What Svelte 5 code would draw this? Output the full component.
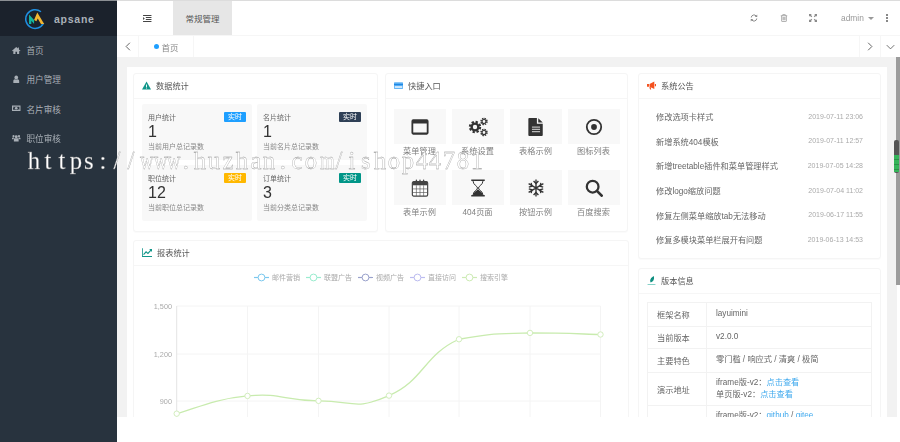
<script>
  const menu = [
    { label: '首页', icon: 'home' },
    { label: '用户管理', icon: 'user' },
    { label: '名片审核', icon: 'money' },
    { label: '职位审核', icon: 'users' }
  ];
  const stats = [
    { t: '用户统计', n: '1', s: '当前用户总记录数', c: 'blue' },
    { t: '名片统计', n: '1', s: '当前名片总记录数', c: 'navy' },
    { t: '职位统计', n: '12', s: '当前职位总记录数', c: 'amber' },
    { t: '订单统计', n: '3', s: '当前分类总记录数', c: 'teal' }
  ];
  const quick = [
    { l: '菜单管理', i: 'window' }, { l: '系统设置', i: 'gears' }, { l: '表格示例', i: 'file' }, { l: '图标列表', i: 'dot' },
    { l: '表单示例', i: 'calendar' }, { l: '404页面', i: 'hourglass' }, { l: '按钮示例', i: 'snow' }, { l: '百度搜索', i: 'search' }
  ];
  const notices = [
    ['修改选项卡样式', '2019-07-11 23:06'],
    ['新增系统404模板', '2019-07-11 12:57'],
    ['新增treetable插件和菜单管理样式', '2019-07-05 14:28'],
    ['修改logo缩放问题', '2019-07-04 11:02'],
    ['修复左侧菜单缩放tab无法移动', '2019-06-17 11:55'],
    ['修复多模块菜单栏展开有问题', '2019-06-13 14:53']
  ];
  const legend = [
    { l: '邮件营销', x: 254, c: '#7cc8ee' },
    { l: '联盟广告', x: 306, c: '#9aeccf' },
    { l: '视频广告', x: 358, c: '#9aa2cc' },
    { l: '直接访问', x: 410, c: '#bcbcf0' },
    { l: '搜索引擎', x: 462, c: '#cdebb4' }
  ];
  const xs = [176.7, 247.5, 318.5, 389, 459, 530, 600.5];
  const vals = [820, 932, 901, 934, 1290, 1330, 1320];
  const pts = vals.map((v, i) => [xs[i], 401 - ((v - 900) * 47.5) / 300]);
  const top = Math.min(...pts.map((p) => p[1]));
  function smooth(p) {
    let d = `M${p[0][0]} ${p[0][1]}`;
    for (let i = 0; i < p.length - 1; i++) {
      const a = p[i], b = p[i + 1], pa = p[i - 1] || a, nb = p[i + 2] || b;
      const c1 = [a[0] + (b[0] - pa[0]) * 0.25, Math.max(top, a[1] + (b[1] - pa[1]) * 0.25)];
      const c2 = [b[0] - (nb[0] - a[0]) * 0.25, Math.max(top, b[1] - (nb[1] - a[1]) * 0.25)];
      d += `C${c1[0]} ${c1[1]} ${c2[0]} ${c2[1]} ${b[0]} ${b[1]}`;
    }
    return d;
  }
  const line = smooth(pts);
  const markChars = [...'https://www.huzhan.com/ishop44781'];
</script>

{#snippet quickIcon(name)}
  <svg class="qicon" class:big={name === 'gears'} viewBox="0 0 20 20">
    {#if name === 'window'}
      <path fill="#333" fill-rule="evenodd" d="M2.500 1.500h15a2 2 0 0 1 2 2v13a2 2 0 0 1-2 2h-15a2 2 0 0 1-2-2v-13a2 2 0 0 1 2-2zM2.500 6v10.200h15V6z" />
    {:else if name === 'gears'}
      <g fill="none" stroke="#333">
        <circle cx="7" cy="10" r="5.200" stroke-width="2" stroke-dasharray="2.300 1.780" />
        <circle cx="7" cy="10" r="3.400" stroke-width="2.400" />
        <circle cx="16" cy="4.500" r="3" stroke-width="1.400" stroke-dasharray="1.500 .86" />
        <circle cx="16" cy="4.500" r="2" stroke-width="1.200" />
        <circle cx="16" cy="15.500" r="3" stroke-width="1.400" stroke-dasharray="1.500 .86" />
        <circle cx="16" cy="15.500" r="2" stroke-width="1.200" />
      </g>
    {:else if name === 'file'}
      <path fill="#333" d="M2.500 0h8.500v6.500h6.500v12.500a1 1 0 0 1-1 1h-14a1 1 0 0 1-1-1v-18a1 1 0 0 1 1-1zM12.500 .3l5 4.800h-5z" />
      <path fill="#bbb" d="M5.500 9.500h9v1.200h-9zM5.500 12h9v1.200h-9zM5.500 14.500h9v1.200h-9z" />
    {:else if name === 'dot'}
      <circle cx="10" cy="10" r="8" fill="none" stroke="#333" stroke-width="2" />
      <circle cx="10" cy="10" r="3.200" fill="#333" />
    {:else if name === 'calendar'}
      <rect x="1.500" y="3" width="17" height="16" rx="1.500" fill="#fff" stroke="#444" stroke-width="1.300" />
      <path fill="#444" d="M2 3h16v4H2z" />
      <path stroke="#555" stroke-width=".7" d="M2 11h16M2 15h16M6 7v12M10 7v12M14 7v12" />
      <path stroke="#444" stroke-width="1.500" stroke-linecap="round" d="M6 1.200v3M10 1.200v3M14 1.200v3" />
    {:else if name === 'hourglass'}
      <path fill="#333" d="M2.500 .5h15v1.800h-15zM2.500 17.700h15v1.800h-15z" />
      <path fill="none" stroke="#333" stroke-width="1.100" d="M4.500 2.300c0 4 5 5.700 5 7.700s-5 3.700-5 7.700M15.500 2.300c0 4-5 5.700-5 7.700s5 3.700 5 7.700" />
      <path fill="#333" d="M10 11c1 2 5.200 3.300 5.400 6.800H4.600C4.800 14.300 9 13 10 11z" />
    {:else if name === 'snow'}
      <g fill="none" stroke="#333" stroke-width="1.500">
        <path d="M10 .5v19M1.800 5.200l16.400 9.600M18.200 5.200L1.800 14.800" />
        <path d="M7.300 2.300L10 5l2.700-2.700M7.300 17.700L10 15l2.700 2.700M2 9l3.500-1L4.600 4.300M18 11l-3.500 1 .9 3.700M18 9l-3.500-1 .9-3.700M2 11l3.500 1-.9 3.700" />
      </g>
    {:else if name === 'search'}
      <circle cx="8.500" cy="8.500" r="6.500" fill="none" stroke="#333" stroke-width="2.500" />
      <path d="M13.500 13.500l5 5" stroke="#333" stroke-width="3" stroke-linecap="round" />
    {/if}
  </svg>
{/snippet}

<div class="app">
  <aside class="side">
    <div class="brand">
      <svg class="logo" viewBox="0 0 24 24">
        <path d="M18.500 4.100A10.200 10.200 0 1 0 21.300 16.500" fill="none" stroke="#1f8fe0" stroke-width="1.700" />
        <path d="M5.500 17.500V7l5.500 6v4.500L8 14v3.500z" fill="#12b5a0" />
        <path d="M11 13l3.500-8L22 17.500h-3.500l-3.500-6-1.500 3z" fill="#f2b632" />
      </svg>
      <span class="brandname">apsane</span>
    </div>
    <nav class="menu">
      {#each menu as m}
        <div class="mitem">
          <svg class="micon" viewBox="0 0 16 16">
            {#if m.icon === 'home'}
              <path d="M8 2L0 9l1 1 1.500-1.200V15h4v-4h3v4h4V8.800L15 10l1-1-3-2.600V3h-2v1.700z" />
            {:else if m.icon === 'user'}
              <circle cx="8" cy="4.500" r="3.500" /><path d="M2.500 15v-3.500C2.500 9 4 8 5.500 7.800c1.500 1 3.500 1 5 0 1.500.2 3 1.200 3 3.700V15z" />
            {:else if m.icon === 'money'}
              <path fill-rule="evenodd" d="M0 3h16v10H0zM2 5v6h12V5z" /><circle cx="8" cy="8" r="2.500" /><path d="M2.500 5.500h1.500v1h-1.500zM12 9.500h1.500v1H12z" />
            {:else}
              <circle cx="8" cy="5" r="2.800" /><circle cx="2.800" cy="4" r="2" /><circle cx="13.200" cy="4" r="2" />
              <path d="M3.500 14v-3.500c0-1.800 1.200-2.500 2.500-2.500h4c1.300 0 2.500.7 2.500 2.500V14zM0 10V8c0-1 .8-1.500 1.500-1.500h2c.2.7.5 1 1 1.300-1.500.4-2 1.200-2 2.200zM16 10V8c0-1-.8-1.500-1.500-1.500h-2c-.2.700-.5 1-1 1.300 1.500.4 2 1.200 2 2.200z" />
            {/if}
          </svg>
          <span>{m.label}</span>
        </div>
      {/each}
    </nav>
  </aside>

  <main class="main">
    <header class="top">
      <div class="burger">
        <svg viewBox="0 0 12 10" class="ticon dark">
          <path d="M0 0h12v1.400H0zM4 2.900h8v1.400H4zM4 5.700h8v1.400H4zM0 8.600h12V10H0z" /><path d="M0 3l2.500 2L0 7z" />
        </svg>
      </div>
      <div class="toptab">常规管理</div>
      <div class="topright">
        <svg viewBox="0 0 16 16" class="ticon">
          <path fill="none" stroke="currentColor" stroke-width="2" d="M2.500 7A5.500 5.500 0 0 1 12.500 4.200M13.500 9A5.500 5.500 0 0 1 3.500 11.800" />
          <path d="M14.500 1v5h-5zM1.500 15v-5h5z" />
        </svg>
        <svg viewBox="0 0 16 16" class="ticon">
          <path fill="none" stroke="currentColor" stroke-width="1.300" d="M1.500 3.500h13M3.200 3.500v10.500a1 1 0 0 0 1 1h7.600a1 1 0 0 0 1-1V3.500M5.500 3.500V1.200h5v2.300M6 6v6.500M8 6v6.500M10 6v6.500" />
        </svg>
        <svg viewBox="0 0 16 16" class="ticon">
          <path d="M0 0h5.500L3.700 1.800 6.500 4.600 4.600 6.500 1.800 3.700 0 5.500zM16 0v5.500l-1.800-1.800-2.800 2.800-1.900-1.900 2.800-2.800L10.500 0zM0 16v-5.500l1.800 1.800 2.800-2.800 1.900 1.900-2.800 2.800 1.800 1.800zM16 16h-5.500l1.800-1.800-2.800-2.800 1.900-1.900 2.800 2.800 1.800-1.800z" />
        </svg>
        <div class="admin">admin<i class="caret"></i></div>
        <div class="dots"><i></i><i></i><i></i></div>
      </div>
    </header>

    <div class="tabs">
      <div class="tnav left">
        <svg viewBox="0 0 8 12" class="chev"><path d="M6.500 1L1.500 6l5 5" /></svg>
      </div>
      <div class="tab"><i class="dot"></i>首页</div>
      <div class="tspace"></div>
      <div class="tnav wide">
        <svg viewBox="0 0 8 12" class="chev"><path d="M1.500 1l5 5-5 5" /></svg>
      </div>
      <div class="tnav wide last">
        <svg viewBox="0 0 12 8" class="chevd"><path d="M1 1.500l5 5 5-5" /></svg>
      </div>
    </div>

    <div class="content">
      <div class="panel">
        <div class="leftcol">
          <div class="toprow">
            <section class="card">
              <h3 class="chead">
                <svg viewBox="0 0 16 16" class="hicon"><path d="M8 1l8 14H0z" fill="#11968a" /><path d="M7.200 6h1.600v5H7.200zM7.200 12h1.600v1.500H7.200z" fill="#fff" /></svg>
                数据统计
              </h3>
              <div class="statgrid">
                {#each stats as s}
                  <div class="stat">
                    <div class="stathead"><span>{s.t}</span><em class={s.c}>实时</em></div>
                    <div class="num">{s.n}</div>
                    <div class="sub">{s.s}</div>
                  </div>
                {/each}
              </div>
            </section>
            <section class="card">
              <h3 class="chead">
                <svg viewBox="0 0 16 16" class="hicon"><path d="M1 2h14a1 1 0 0 1 1 1v10a1 1 0 0 1-1 1H1a1 1 0 0 1-1-1V3a1 1 0 0 1 1-1z" fill="#64b5f6" /><path d="M0 5h16v2.500H0z" fill="#1e88e5" /><path d="M1.500 9h13v3.500h-13z" fill="#cfe8fc" /></svg>
                快捷入口
              </h3>
              <div class="quickgrid">
                {#each quick as q}
                  <div class="quick">
                    <div class="qbox">{@render quickIcon(q.i)}</div>
                    <div class="qlabel">{q.l}</div>
                  </div>
                {/each}
              </div>
            </section>
          </div>
          <section class="card chart">
            <h3 class="chead">
              <svg viewBox="0 0 16 14" class="hicon wide"><path d="M0 0h1.300v12.700H16V14H0z" fill="#11968a" /><path d="M2.500 10.500l4-4.500 3 2.500L15 2.500" fill="none" stroke="#11968a" stroke-width="1.800" /><path d="M11.500 1.500H16V6z" fill="#11968a" /></svg>
              报表统计
            </h3>
            <svg class="plot" viewBox="134 266 494 190" width="494" height="190">
              {#each legend as l}
                <path d="M{l.x} 277.500h15" stroke={l.c} stroke-width="1.200" />
                <circle cx={l.x + 7.500} cy="277.500" r="3.400" fill="#fff" stroke={l.c} stroke-width="1" />
                <text x={l.x + 18} y="280" class="legend">{l.l}</text>
              {/each}
              {#each [306, 354, 401] as y}
                <path d="M176.700 {y}H600.500" stroke="#f4f4f4" stroke-width="1" />
              {/each}
              {#each xs as x, i}
                <path d="M{x} 306V456" stroke={i === 0 ? '#e4e4e4' : '#f4f4f4'} stroke-width="1" />
              {/each}
              <text x="172" y="308.500" class="axis">1,500</text>
              <text x="172" y="356.500" class="axis">1,200</text>
              <text x="172" y="403.500" class="axis">900</text>
              <path d={line} fill="none" stroke="#c8ebae" stroke-width="1.300" />
              {#each pts as p}
                <circle cx={p[0]} cy={p[1]} r="2.700" fill="#fff" stroke="#d2eebd" stroke-width="1" />
              {/each}
            </svg>
          </section>
        </div>

        <div class="rightcol">
          <section class="card notice">
            <h3 class="chead">
              <svg viewBox="0 0 16 14" class="hicon"><path d="M0 4.500h3.500v4.500H0zM4.500 4.500L13 0v13L4.500 9zM14 4.500h2v4h-2zM4 10h2.500l1 4h-2z" fill="#f4511e" /></svg>
              系统公告
            </h3>
            <ul class="nlist">
              {#each notices as n}
                <li><span>{n[0]}</span><time>{n[1]}</time></li>
              {/each}
            </ul>
          </section>
          <section class="card version">
            <h3 class="chead">
              <svg viewBox="0 0 16 16" class="hicon"><path d="M12 0c1 3 .5 6-1 8.500-1 1.500-2.500 2.500-4.500 3L5.500 9C5.500 5 8.500 2 12 0z" fill="#0f8f80" /><path d="M1 14h14v1.500H1z" fill="#5fc2b6" /></svg>
              版本信息
            </h3>
            <div class="tablewrap">
              <table>
                <tbody>
                  <tr class="r1"><th>框架名称</th><td>layuimini</td></tr>
                  <tr class="r2"><th>当前版本</th><td>v2.0.0</td></tr>
                  <tr class="r1"><th>主要特色</th><td>零门槛 / 响应式 / 清爽 / 极简</td></tr>
                  <tr class="r3"><th>演示地址</th><td>iframe版-v2：<a href="#a">点击查看</a><br />单页版-v2：<a href="#a">点击查看</a></td></tr>
                  <tr class="r3"><th>下载地址</th><td>iframe版-v2：<a href="#a">github</a> / <a href="#a">gitee</a><br />单页版-v2：<a href="#a">github</a> / <a href="#a">gitee</a></td></tr>
                </tbody>
              </table>
            </div>
          </section>
        </div>
      </div>
      <div class="track"><div class="bar"></div></div>
      <div class="thumb"><i></i></div>
    </div>
  </main>
  <div class="mark">{#each markChars as c}<span class:tight={c === 'w' || c === 'm'}>{c}</span>{/each}</div>
</div>

<style>
  :global(body) { margin: 0; background: #fff; }
  .app {
    position: relative;
    display: flex;
    width: 900px;
    height: 442px;
    overflow: hidden;
    font-family: "Liberation Sans", "Noto Sans CJK SC", sans-serif;
    filter: blur(0.4px);
  }
  .side { width: 117px; flex: none; background: #28333e; color: #a8afb6; }
  .brand {
    height: 36px;
    background: #1b222c;
    display: flex;
    align-items: center;
    gap: 8px;
    padding-left: 24px;
    box-sizing: border-box;
    border-top: 1px solid #8b8f93;
  }
  .logo { width: 22px; height: 22px; }
  .brandname { font-size: 10.500px; font-weight: 700; color: #a9b0b8; letter-spacing: .75px; }
  .mitem {
    height: 29.400px;
    box-sizing: border-box;
    padding: 0 0 1.500px 12px;
    display: flex;
    align-items: center;
    gap: 6px;
    font-size: 8.600px;
  }
  .micon { width: 8.500px; height: 8.500px; fill: #a8afb6; flex: none; }

  .main { flex: 1; min-width: 0; display: flex; flex-direction: column; height: 417px; }
  .top {
    height: 36px;
    box-sizing: border-box;
    display: flex;
    align-items: stretch;
    border-top: 1px solid #dcdcdc;
    border-bottom: 1px solid #f6f6f6;
  }
  .burger { width: 56px; box-sizing: border-box; padding-left: 5px; display: flex; align-items: center; justify-content: center; }
  .ticon { width: 8px; height: 8px; fill: #8a8a8a; color: #8a8a8a; flex: none; }
  .ticon.dark { width: 8.500px; height: 7px; fill: #444; }
  .toptab {
    width: 59px;
    background: #e6e6e6;
    display: flex;
    align-items: center;
    justify-content: center;
    font-size: 8.500px;
    color: #555;
  }
  .topright {
    margin-left: auto;
    display: flex;
    align-items: center;
    padding-right: 12px;
    gap: 21.500px;
  }
  .admin { display: flex; align-items: center; font-size: 8.400px; color: #999; margin-left: 2.500px; margin-right: -8.500px; width: 32px; flex: none; }
  .caret {
    margin-left: 4px;
    border: 3px solid transparent;
    border-top: 3.500px solid #999;
    border-bottom: 0;
  }
  .dots { display: flex; flex-direction: column; gap: 1px; }
  .dots i { width: 2px; height: 2px; background: #888; display: block; }

  .tabs { height: 21px; flex: none; display: flex; align-items: center; }
  .tnav { width: 22px; height: 100%; display: flex; align-items: center; justify-content: center; }
  .tnav.left { border-right: 1px solid #f6f6f6; box-sizing: border-box; padding-left: 1px; }
  .tnav.wide { width: 20.500px; border-left: 1px solid #f6f6f6; box-sizing: border-box; }
  .tab {
    width: 55px;
    height: 100%;
    box-sizing: border-box;
    padding-left: 14.500px;
    display: flex;
    align-items: center;
    gap: 3px;
    font-size: 8.500px;
    color: #888;
    border-right: 1px solid #f6f6f6;
  }
  .tab .dot { width: 5px; height: 5px; border-radius: 50%; background: #1e9fff; flex: none; }
  .tspace { flex: 1; }
  .chev { width: 6px; height: 9px; fill: none; stroke: #555; stroke-width: 1.200; }
  .chevd { width: 9px; height: 6px; fill: none; stroke: #555; stroke-width: 1.100; }

  .content {
    position: relative;
    flex: 1;
    min-height: 0;
    background: #f2f2f2;
    display: flex;
    padding: 10px 0 0 10px;
    overflow: hidden;
  }
  .panel {
    width: 760px;
    flex: none;
    box-sizing: border-box;
    background: #fff;
    padding: 6px 6px 0 6px;
    display: grid;
    grid-template-columns: 496px 243px;
    column-gap: 9px;
    align-items: start;
    overflow: hidden;
  }
  .track { margin-left: 10px; margin-top: -10px; width: 3px; background: #fff; flex: none; }
  .bar { height: 228px; background: #9c9c9c; margin-left: -1px; width: 4px; }
  .thumb {
    position: absolute;
    left: 777px;
    top: 83px;
    width: 4.500px;
    height: 33px;
    background: #555;
    border-radius: 2px;
    display: flex;
    flex-direction: column;
    justify-content: flex-end;
    padding-bottom: 1px;
    box-sizing: border-box;
  }
  .thumb i {
    display: block;
    height: 17px;
    background: repeating-linear-gradient(#35b55a 0 4px, #2c8f49 4px 5px);
  }

  .leftcol, .rightcol { display: flex; flex-direction: column; }
  .leftcol { gap: 9px; }
  .rightcol { gap: 9px; }
  .toprow { display: grid; grid-template-columns: 245px 243px; column-gap: 7px; height: 158px; }
  .card {
    background: #fff;
    border: 1px solid #f5f5f5;
    border-radius: 3px;
    box-sizing: border-box;
    box-shadow: 0 1px 1px rgba(0,0,0,.02);
  }
  .chead {
    margin: 0;
    height: 25px;
    box-sizing: border-box;
    display: flex;
    align-items: center;
    padding: 0 0 2px 8px;
    gap: 5px;
    font-size: 8.200px;
    font-weight: 400;
    color: #555;
    border-bottom: 1px solid #f6f6f6;
  }
  .hicon { width: 9px; height: 9px; flex: none; }
  .hicon.wide { width: 10px; }

  .statgrid {
    display: grid;
    grid-template-columns: 110px 110px;
    grid-auto-rows: 56px;
    gap: 5px;
    padding: 5px 0 0 8px;
  }
  .stat { background: #f8f8f8; padding: 8px 6px 0 6px; box-sizing: border-box; border-radius: 2px; }
  .stathead { display: flex; justify-content: space-between; align-items: center; font-size: 7px; color: #666; height: 10px; }
  .stathead em {
    font-style: normal;
    width: 22px;
    height: 10px;
    line-height: 10px;
    text-align: center;
    font-size: 7px;
    color: #fff;
    border-radius: 1px;
  }
  .blue { background: #1e9fff; }
  .navy { background: #2f4056; }
  .amber { background: #ffb800; }
  .teal { background: #009688; }
  .num { font-size: 16px; line-height: 17px; color: #333; margin-top: 1px; }
  .sub { font-size: 7px; line-height: 10px; color: #888; margin-top: 1.500px; }

  .quickgrid {
    display: grid;
    grid-template-columns: repeat(4, 52px);
    grid-auto-rows: 61px;
    column-gap: 6px;
    padding: 10px 0 0 7.500px;
  }
  .quick { display: flex; flex-direction: column; align-items: center; }
  .qbox { width: 52px; height: 35px; background: #f8f8f8; display: flex; align-items: center; justify-content: center; flex: none; }
  .qicon { width: 18px; height: 18px; }
  .qicon.big { width: 20px; height: 20px; }
  .qlabel { font-size: 8.200px; line-height: 16px; color: #808080; }

  .chart { height: 190px; overflow: hidden; }
  .plot { display: block; }
  .legend { font-size: 7px; fill: #aaa; }
  .axis { font-size: 7.300px; fill: #aaa; text-anchor: end; }

  .notice { height: 186px; }
  .nlist { list-style: none; margin: 0; padding: 5px 17px 0 17px; }
  .nlist li {
    height: 24.600px;
    display: flex;
    align-items: center;
    justify-content: space-between;
    font-size: 8.200px;
    color: #666;
  }
  .nlist time { font-size: 7px; color: #aaa; }
  .version { height: 190px; overflow: hidden; }
  .tablewrap { padding: 8px 0 0 8px; }
  table { border-collapse: collapse; width: 225px; table-layout: fixed; font-size: 8.200px; color: #666; }
  th { width: 59px; font-weight: 400; text-align: left; padding: 0 0 1px 9px; box-sizing: border-box; }
  td { padding: 0 0 1px 9px; line-height: 11.600px; }
  th, td { border: 1px solid #f2f2f2; }
  .r1 { height: 24px; }
  .r2 { height: 22px; }
  .r3 { height: 33px; }
  a { color: #3fa9ee; text-decoration: none; }

  .mark {
    position: absolute;
    left: 27px;
    top: 144px;
    display: flex;
    font-family: "Liberation Serif", serif;
    font-size: 26px;
    line-height: 34px;
    color: #fff;
    -webkit-text-stroke: 0.3px #8a8a8a;
    white-space: nowrap;
    pointer-events: none;
  }
  .mark span { display: block; width: 13.850px; flex: none; text-align: center; transform: scaleX(.95); white-space: pre; }
  .mark span.tight { transform: scaleX(.72); }
</style>
